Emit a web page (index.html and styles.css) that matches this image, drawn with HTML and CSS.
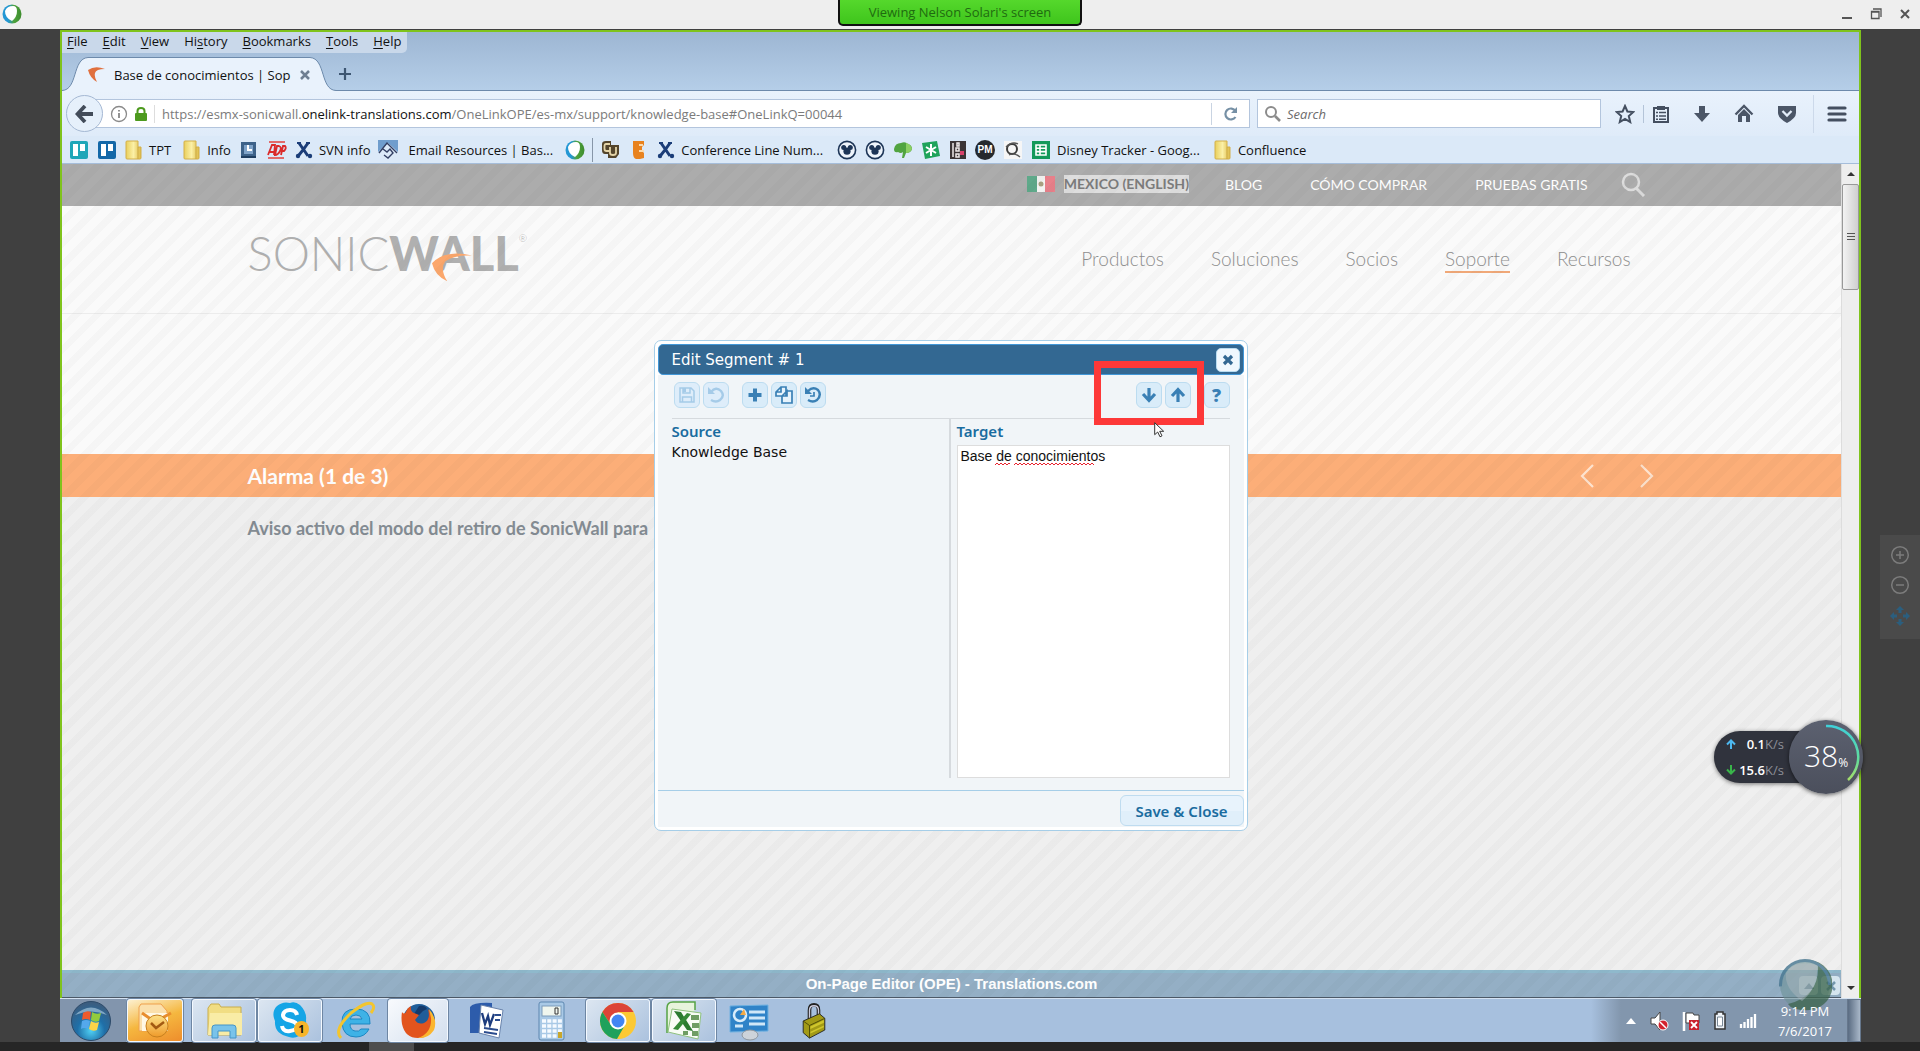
FILE: index.html
```html
<!DOCTYPE html>
<html lang="es">
<head>
<meta charset="utf-8">
<title>Viewing Nelson Solari's screen</title>
<link rel="stylesheet" href="styles.css">
</head>
<body>
<svg width="0" height="0" class="defs" aria-hidden="true">
  <defs>
    <linearGradient id="gFolder" x1="0" x2="1"><stop offset="0" stop-color="#e9cf5c"/><stop offset=".5" stop-color="#fbf0a6"/><stop offset="1" stop-color="#dcb944"/></linearGradient>
    <linearGradient id="gBall" x1="0" x2="1"><stop offset="0.3" stop-color="#2497d4"/><stop offset=".6" stop-color="#4fa33c"/><stop offset="1" stop-color="#3d8c2e"/></linearGradient>
    <radialGradient id="gStart" cx=".5" cy=".75" r=".7"><stop offset="0" stop-color="#4fd0f5"/><stop offset=".5" stop-color="#1f6fa8"/><stop offset="1" stop-color="#3b5d80"/></radialGradient>
    <linearGradient id="gOutlook" x1="0" y1="0" x2="0" y2="1"><stop offset="0" stop-color="#fde28a"/><stop offset="1" stop-color="#ef9a2a"/></linearGradient>
    <linearGradient id="gGauge" x1="0" y1="0" x2="0" y2="1"><stop offset="0" stop-color="#3fd0d8"/><stop offset=".6" stop-color="#5fdc9f"/><stop offset="1" stop-color="#a5dd6a"/></linearGradient>
  </defs>
  <symbol id="folder" viewBox="0 0 18 20"><path d="M2 1h11v6h3v11q0 1-1 1H2q-1 0-1-1V2q0-1 1-1z" fill="url(#gFolder)" stroke="#d3b04a"/><path d="M13 7v12" stroke="#c9a53c"/></symbol>
  <symbol id="ball" viewBox="0 0 20 20"><ellipse cx="10" cy="10" rx="9.5" ry="9.5" fill="url(#gBall)"/><path d="M3 7q2-5 8-5 4 0 4 5 0 6-5 10Q3 14 3 7z" fill="#fff"/></symbol>
  <symbol id="xmark" viewBox="0 0 18 18"><path d="M4 2L13 15M13 2Q9 8 4 14" stroke="#1b3d78" stroke-width="3" fill="none"/><circle cx="3" cy="15" r="2.2" fill="#1b3d78"/><circle cx="15" cy="15" r="2.2" fill="#1b3d78"/><path d="M2 2h4M11 2h4" stroke="#1b3d78" stroke-width="2"/></symbol>
  <symbol id="mickey" viewBox="0 0 20 20"><circle cx="10" cy="10" r="8.6" fill="#eef4fb" stroke="#1d3557" stroke-width="1.6"/><circle cx="6.7" cy="7.6" r="2.5" fill="#1d3557"/><circle cx="13.3" cy="7.6" r="2.5" fill="#1d3557"/><circle cx="10" cy="11.2" r="3.6" fill="#1d3557"/></symbol>
</svg>

<header class="titlebar">
  <svg class="app-icon" viewBox="0 0 20 20"><use href="#ball"/></svg>
  <div class="viewing">Viewing Nelson Solari's screen</div>
  <div class="window-buttons">
    <button type="button" aria-label="Minimize"><svg width="12" height="14" viewBox="0 0 12 14"><path d="M1 11h10" stroke="#555" stroke-width="2"/></svg></button>
    <button type="button" aria-label="Restore"><svg width="12" height="14" viewBox="0 0 12 14"><path d="M1.5 4.500h7.500v7H1.500zM1 5h8M3 2h8v8" stroke="#555" stroke-width="1.300" fill="none"/></svg></button>
    <button type="button" aria-label="Close"><svg width="12" height="14" viewBox="0 0 12 14"><path d="M2 3l8 8M10 3l-8 8" stroke="#555" stroke-width="2"/></svg></button>
  </div>
</header>

<main class="stage">
  <div class="screen">
    <div class="browser">
      <div class="chrome-top">
        <nav class="menubar" aria-label="Browser menu">
          <button type="button"><u>F</u>ile</button><button type="button"><u>E</u>dit</button><button type="button"><u>V</u>iew</button><button type="button">Hi<u>s</u>tory</button><button type="button"><u>B</u>ookmarks</button><button type="button"><u>T</u>ools</button><button type="button"><u>H</u>elp</button>
        </nav>
        <div class="tabs">
          <svg class="tab-edge" viewBox="0 0 26 34"><path d="M0 33.500C16 33 10 1.500 26 .500V34H0z" fill="#e9f2fc"/><path d="M0 33.500C16 33 10 1.500 26 .500" fill="none" stroke="#6d8aab"/></svg>
          <div class="tab">
            <svg width="18" height="18" viewBox="0 0 18 18"><path d="M0 4Q7-1 17 3 8 3 7 7 6 11 9 16 2 12 0 4z" fill="#e0703e"/></svg>
            <span class="tab-title">Base de conocimientos | Sop</span>
            <button type="button" aria-label="Close tab"><svg width="10" height="10" viewBox="0 0 10 10"><path d="M1 1l8 8M9 1L1 9" stroke="#6f7f92" stroke-width="2.500"/></svg></button>
          </div>
          <svg class="tab-edge" viewBox="0 0 26 34"><path d="M26 33.500C10 33 16 1.500 0 .500V34H26z" fill="#e9f2fc"/><path d="M26 33.500C10 33 16 1.500 0 .500" fill="none" stroke="#6d8aab"/></svg>
          <button type="button" class="new-tab" aria-label="New tab"><svg width="12" height="12" viewBox="0 0 12 12"><path d="M6 0v12M0 6h12" stroke="#3d5672" stroke-width="2.200"/></svg></button>
        </div>
      </div>

      <div class="toolbar">
        <button type="button" class="back" aria-label="Back"><svg width="20" height="18" viewBox="0 0 20 18"><path d="M10 1L2.500 9l7.500 8M3 9h15" fill="none" stroke="#434c5a" stroke-width="3.800"/></svg></button>
        <div class="urlbar">
          <svg width="18" height="18" viewBox="0 0 18 18"><circle cx="9" cy="9" r="7.500" fill="none" stroke="#8a8a8a" stroke-width="1.300"/><path d="M9 8v5M9 5v1.600" stroke="#777" stroke-width="1.600"/></svg>
          <svg width="14" height="16" viewBox="0 0 14 16"><rect x="1" y="7" width="12" height="8" rx="1" fill="#4d9a1e"/><path d="M3.500 8V5q0-3 3.500-3t3.500 3v3" fill="none" stroke="#4d9a1e" stroke-width="2"/></svg>
          <span class="url">https://esmx-sonicwall.<b>onelink-translations.com</b>/OneLinkOPE/es-mx/support/knowledge-base#OneLinkQ=00044</span>
          <button type="button" class="reload" aria-label="Reload"><svg width="16" height="16" viewBox="0 0 16 16"><path d="M12.500 5A5.500 5.500 0 1 0 12.500 11" fill="none" stroke="#7690a5" stroke-width="2.200"/><path d="M14 1v6H8z" fill="#7690a5"/></svg></button>
        </div>
        <label class="search"><svg width="18" height="18" viewBox="0 0 18 18"><circle cx="7" cy="7" r="5" fill="none" stroke="#8b8b8b" stroke-width="2"/><path d="M11 11l5 5" stroke="#8b8b8b" stroke-width="2.600"/></svg><input type="text" placeholder="Search" aria-label="Search"></label>
        <div class="tool-icons">
          <button type="button" aria-label="Bookmark"><svg width="20" height="20" viewBox="0 0 20 20"><path d="M10 2l2.400 5.500 5.900.5-4.500 4 1.400 6L10 14.800 4.800 18l1.400-6-4.500-4 5.900-.5z" fill="none" stroke="#444f60" stroke-width="2"/></svg></button>
          <i class="bar"></i>
          <button type="button" aria-label="Bookmarks list"><svg width="18" height="20" viewBox="0 0 18 20"><path d="M2 4h14v14H2z" fill="none" stroke="#444f60" stroke-width="2"/><path d="M5 2h8v4H5z" fill="#444f60"/><path d="M4 8.500h2M7 8.500h7M4 12h2M7 12h7M4 15.200h2M7 15.200h7" stroke="#444f60" stroke-width="1.600"/></svg></button>
          <button type="button" aria-label="Downloads"><svg width="18" height="18" viewBox="0 0 18 18"><path d="M6 1h6v7h5l-8 9-8-9h5z" fill="#4b5667"/></svg></button>
          <button type="button" aria-label="Home"><svg width="20" height="20" viewBox="0 0 20 20"><path d="M1.500 10.500L10 2l8.500 8.500" fill="none" stroke="#4b5667" stroke-width="2.300"/><path d="M4 11l6-6 6 6v7h-4v-6H8v6H4z" fill="#4b5667"/></svg></button>
          <button type="button" aria-label="Pocket"><svg width="20" height="18" viewBox="0 0 20 18"><path d="M1 1h18v7q0 5-9 10-9-5-9-10z" fill="#4b5667"/><path d="M5.500 6l4.500 4.500L14.500 6" fill="none" stroke="#e4eefa" stroke-width="2.300"/></svg></button>
          <button type="button" aria-label="Menu" class="hamburger"><svg width="20" height="18" viewBox="0 0 20 18"><path d="M2 3h16M2 9h16M2 15h16" stroke="#444f60" stroke-width="3.200" stroke-linecap="round"/></svg></button>
        </div>
      </div>

      <nav class="bookmarks" aria-label="Bookmarks">
        <a href="#" aria-label="Trello"><svg width="20" height="20" viewBox="0 0 20 20"><rect x="1" y="1" width="18" height="18" rx="2" fill="#1fa6b8"/><path d="M4 4h5v12H4zM11 4h5v7h-5z" fill="#fff"/></svg></a>
        <a href="#" class="g8" aria-label="Trello boards"><svg width="20" height="20" viewBox="0 0 20 20"><rect x="1" y="1" width="18" height="18" rx="2" fill="#1468a8"/><path d="M4 4h5v12H4zM11 4h5v7h-5z" fill="#fff"/></svg></a>
        <a href="#" class="g8"><svg width="18" height="20"><use href="#folder"/></svg>TPT</a>
        <a href="#" class="g10"><svg width="18" height="20"><use href="#folder"/></svg>Info</a>
        <a href="#" class="g8" aria-label="Journal"><svg width="20" height="18" viewBox="0 0 20 18"><path d="M2 1h15v15H2z" fill="#3d6289"/><path d="M5 4h9v9H5z" fill="#7fa3c9"/><path d="M9 4v5h4" stroke="#fff" stroke-width="2" fill="none"/><path d="M2 16h15" stroke="#1e3d60" stroke-width="2"/></svg></a>
        <a href="#" class="g8" aria-label="ADP"><svg width="20" height="20" viewBox="0 0 20 20"><path d="M2 2h16M1 18h16" stroke="#e26a6a" stroke-width="2"/><path d="M1 15L5 5h3l-1 10M3 12h4M8 15l2-9h2q3 1 1 5-2 4-5 4zM14 15l2-9h2q2 2-1 5h-2" stroke="#da2b2b" stroke-width="1.800" fill="none"/></svg></a>
        <a href="#" class="g8"><svg width="18" height="18"><use href="#xmark"/></svg>SVN info</a>
        <a href="#" class="g8"><svg width="20" height="20" viewBox="0 0 20 20"><path d="M0 0h20v12L10 3 0 12z" fill="#6f9dcd"/><path d="M1 13l8-10 10 10M5 9l4 3 3-3 3 4-5 5-4-3" fill="none" stroke="#333f63" stroke-width="1.400"/></svg><span class="in">Email Resources | Bas...</span></a>
        <a href="#" class="g10" aria-label="WebEx"><svg width="20" height="20"><use href="#ball"/></svg></a>
        <i class="divider"></i>
        <a href="#" class="g8" aria-label="CU"><svg width="20" height="20" viewBox="0 0 20 20"><path d="M1 4q0-3 4-3h5v4h8v9l-3 4H7v-4H4q-3 0-3-4z" fill="#54452c"/><path d="M9 4H5Q3.500 4 3.500 6v3q0 2 2 2h3M9 7v6q0 2 3 2t3-2V7" fill="none" stroke="#e4d4a8" stroke-width="1.800"/></svg></a>
        <a href="#" class="g8" aria-label="Orange"><svg width="20" height="20" viewBox="0 0 20 20"><path d="M4 1h11v4l-2 2v4l2 2v5l-4 1H7q-3-1-3-6z" fill="#e8821e"/><path d="M10 5h4M10 11h5" stroke="#fcd9a9" stroke-width="2"/></svg></a>
        <a href="#" class="g8"><svg width="18" height="18"><use href="#xmark"/></svg><span>Conference Line Num...</span></a>
        <a href="#" class="g14" aria-label="Disney"><svg width="20" height="20"><use href="#mickey"/></svg></a>
        <a href="#" class="g8" aria-label="Disney 2"><svg width="20" height="20"><use href="#mickey"/></svg></a>
        <a href="#" class="g8" aria-label="Leaf"><svg width="20" height="20" viewBox="0 0 20 20"><path d="M1 9q1-6 7-6 4-2 7 1 4 1 4 5-1 4-6 4l-2 5h-2l1-6q-2 2-5 0-4 1-4-3z" fill="#51a440"/><path d="M13 3q5 1 6 6-2 4-6 4z" fill="#8ccf63"/></svg></a>
        <a href="#" class="g8" aria-label="Asterisk"><svg width="20" height="20" viewBox="0 0 20 20"><path d="M1 3l15-2 3 15-15 3z" fill="#1fa35a"/><path d="M10 4v12M5 7l10 6M15 7L5 13" stroke="#fff" stroke-width="2"/></svg></a>
        <a href="#" class="g8" aria-label="Grid"><svg width="18" height="20" viewBox="0 0 18 20"><path d="M1 1h16v18H1z" fill="#3b3436"/><path d="M4 3v14M8 3h2v3H8zM7 8h3v3H7zM7 14h3v3H7z" stroke="#efe9ea" stroke-width="1.500" fill="none"/><path d="M11 11h4v4h-4z" fill="#d8416b"/></svg></a>
        <a href="#" class="g8" aria-label="PM"><span class="pm">PM</span></a>
        <a href="#" class="g8" aria-label="Q"><svg width="20" height="20" viewBox="0 0 20 20"><path d="M1 1h18v18H1z" fill="#f6f6f6"/><circle cx="9" cy="9" r="5" fill="none" stroke="#3b3b3b" stroke-width="2"/><path d="M3 7Q9 1 15 4M6 15q5-3 11 2" stroke="#555" stroke-width="1.300" fill="none"/></svg></a>
        <a href="#" class="g8"><svg width="20" height="20" viewBox="0 0 20 20"><path d="M1 1h18v18H1z" fill="#12995a"/><path d="M5 5h10v10H5zM5 8.300h10M5 11.600h10M9 5v10" fill="none" stroke="#fff" stroke-width="1.600"/></svg>Disney Tracker - Goog...</a>
        <a href="#" class="g14"><svg width="18" height="20"><use href="#folder"/></svg>Confluence</a>
      </nav>

      <div class="viewport">
        <div class="site">
          <div class="site-top">
            <div class="wrap">
              <svg class="flag" width="28" height="16" viewBox="0 0 28 16"><path d="M0 0h10v16H0z" fill="#5fa98a"/><path d="M10 0h8v16h-8z" fill="#f3f3f1"/><path d="M18 0h10v16H18z" fill="#e8808a"/><circle cx="14" cy="8" r="2.500" fill="#a8a080"/></svg>
              <a href="#" class="country">MEXICO (ENGLISH)</a>
              <a href="#" class="blog">BLOG</a>
              <a href="#" class="buy">CÓMO COMPRAR</a>
              <a href="#" class="trial">PRUEBAS GRATIS</a>
              <button type="button" class="site-search" aria-label="Buscar"><svg width="26" height="26" viewBox="0 0 26 26"><circle cx="11" cy="11" r="8" fill="none" stroke="#dcdcdc" stroke-width="2.500"/><path d="M16 17l8 8" stroke="#dcdcdc" stroke-width="3"/></svg></button>
            </div>
          </div>
          <header class="site-head">
            <div class="wrap">
              <a href="#" class="logo" aria-label="SonicWall">SONIC<b>WALL</b><sup>®</sup><svg width="40" height="30" viewBox="0 0 42 30"><path d="M0 11Q14-4 42 3 24 2 14 9 8 17 16 30 3 24 0 11z" fill="#fba76c"/></svg></a>
              <nav class="site-nav" aria-label="Principal">
                <a href="#">Productos</a><a href="#">Soluciones</a><a href="#">Socios</a><a href="#" class="current">Soporte</a><a href="#">Recursos</a>
              </nav>
            </div>
          </header>
          <div class="hero"></div>
          <section class="alarm">
            <div class="wrap">
              <h2>Alarma (1 de 3)</h2>
              <div class="arrows">
                <button type="button" aria-label="Anterior"><svg width="14" height="24" viewBox="0 0 14 24"><path d="M13 1L2 12l11 11" fill="none" stroke="#fde3cf" stroke-width="2.200"/></svg></button>
                <button type="button" aria-label="Siguiente"><svg width="14" height="24" viewBox="0 0 14 24"><path d="M1 1l11 11L1 23" fill="none" stroke="#fde3cf" stroke-width="2.200"/></svg></button>
              </div>
            </div>
          </section>
          <section class="notice"><div class="wrap"><p>Aviso activo del modo del retiro de SonicWall para</p></div></section>
          <footer class="ope">On-Page Editor (OPE) - Translations.com</footer>
          <div class="stripes"></div>
          <div class="ope-buttons">
            <button type="button" aria-label="Expand"><svg width="10" height="8" viewBox="0 0 10 8"><path d="M5 1l5 6H0z" fill="#5c7f92"/></svg></button>
            <button type="button" aria-label="Close editor"><svg width="10" height="10" viewBox="0 0 10 10"><path d="M1 1l8 8M9 1L1 9" stroke="#7397ac" stroke-width="2.500"/></svg></button>
          </div>

          <section class="dialog" role="dialog" aria-labelledby="dlg-title">
            <header class="dlg-head">
              <h1 id="dlg-title">Edit Segment # 1</h1>
              <button type="button" aria-label="Close"><svg width="12" height="12" viewBox="0 0 12 12"><path d="M2 2l8 8M10 2l-8 8" stroke="#336892" stroke-width="3.200"/></svg></button>
            </header>
            <div class="dlg-body">
              <div class="dlg-tools">
                <button type="button" class="ib" disabled aria-label="Save"><svg viewBox="0 0 20 20"><path d="M3 3h11l3 3v11H3zM6 3v5h7V3M5.500 17v-5h9v5" fill="none" stroke="#a5cbe8" stroke-width="1.500"/><path d="M6 3h3v4H6z" fill="#a5cbe8"/></svg></button>
                <button type="button" class="ib" disabled aria-label="Undo"><svg viewBox="0 0 20 20"><path d="M5 7q5-6 10-1 4 5-1 9-4 3-9 0" fill="none" stroke="#a5cbe8" stroke-width="2.400"/><path d="M2 2v7h7z" fill="#a5cbe8"/></svg></button>
                <button type="button" class="ib gap-l" aria-label="Add"><svg viewBox="0 0 20 20"><path d="M10 3.500v13M3.500 10h13" stroke="#3a80b5" stroke-width="4"/></svg></button>
                <button type="button" class="ib" aria-label="Copy"><svg viewBox="0 0 20 20"><path d="M7 2h5v9H2V7zM7 2v5H2M12 6h6v12H8v-7l5-5v5H8" fill="#e6f3fc" stroke="#3a80b5" stroke-width="1.700"/></svg></button>
                <button type="button" class="ib" aria-label="History"><svg viewBox="0 0 20 20"><path d="M5 6q5-5 10-1 4 5-1 10-4 3-9 0" fill="none" stroke="#3a80b5" stroke-width="2.400"/><path d="M2 2v7h7z" fill="#3a80b5"/><path d="M11 7v4H7" fill="none" stroke="#3a80b5" stroke-width="1.700"/></svg></button>
                <button type="button" class="ib push" aria-label="Next segment"><svg viewBox="0 0 20 20"><path d="M10 3v12M4 9l6 6.500L16 9" fill="none" stroke="#3a80b5" stroke-width="3.200"/></svg></button>
                <button type="button" class="ib" aria-label="Previous segment"><svg viewBox="0 0 20 20"><path d="M10 17V5M4 11l6-6.500 6 6.500" fill="none" stroke="#3a80b5" stroke-width="3.200"/></svg></button>
                <button type="button" class="ib gap-s" aria-label="Help">?</button>
                <span class="marker"></span>
              </div>
              <div class="cols">
                <div class="source"><h3>Source</h3><p>Knowledge Base</p></div>
                <div class="target"><label for="target">Target</label>
                  <div class="field"><textarea id="target" spellcheck="false">Base de conocimientos</textarea>
                  <svg class="squiggle" width="110" height="4" viewBox="0 0 110 4"><path d="M0 3l2-2 2 2 2-2 2 2 2-2 2 2 2-2 1 1M19 3l2-2 2 2 2-2 2 2 2-2 2 2 2-2 2 2 2-2 2 2 2-2 2 2 2-2 2 2 2-2 2 2 2-2 2 2 2-2 2 2 2-2 2 2 2-2 2 2 2-2 2 2 2-2 2 2 2-2 2 2 2-2 2 2 2-2 2 2 2-2 2 2 2-2 2 2 2-2 2 2" fill="none" stroke="#e8222e"/></svg></div>
                </div>
              </div>
              <svg class="cursor" width="11" height="16" viewBox="0 0 11 16"><path d="M.700.700v12l3-2.700 2.300 4.800 2-1-2.300-4.500h4z" fill="#fff" stroke="#333"/></svg>
            </div>
            <footer class="dlg-foot"><button type="button">Save &amp; Close</button></footer>
          </section>
        </div>
        <div class="scroll" aria-hidden="true">
          <svg width="18" height="20" viewBox="0 0 18 20"><path d="M9 8l4 4H5z" fill="#333"/></svg>
          <div class="thumb"><i></i></div>
          <svg class="down" width="18" height="20" viewBox="0 0 18 20"><path d="M9 12l4-4H5z" fill="#333"/></svg>
        </div>
      </div>
    </div>

    <footer class="taskbar">
      <button type="button" class="task start" aria-label="Start"><svg width="42" height="42" viewBox="0 0 42 42"><circle cx="21" cy="21" r="19.500" fill="url(#gStart)" stroke="#2d4a69"/><path d="M5 15Q21 0 37 15 21 8 5 15z" fill="#b8d4e6" opacity=".6"/><path d="M13 13q4-3 8-1l-1 8q-4-2-8 0z" fill="#ee5a2c"/><path d="M22 12q4 3 9 1l-2 8q-4 2-8-1z" fill="#93cc3d"/><path d="M12 21q4-2 8 0l-2 8q-4-2-7 0z" fill="#54a8ec"/><path d="M21 21q4 3 8 1l-2 8q-4 2-8-1z" fill="#fdd447"/></svg></button>
      <button type="button" class="task open hot" aria-label="Outlook"><svg width="40" height="40" viewBox="0 0 40 40"><path d="M6 3h20l6 7v20H4V6z" fill="#fbe0ac" stroke="#efa04c"/><path d="M7 12h26v18H7z" fill="#fff8e4"/><path d="M7 12l13 9 16-9" fill="none" stroke="#e88d2e" stroke-width="3"/><circle cx="22" cy="25" r="11" fill="url(#gOutlook)" stroke="#c7801f"/><path d="M16 22l5 5 8-6" fill="none" stroke="#a35a12" stroke-width="2.500"/></svg></button>
      <button type="button" class="task open s9" aria-label="Explorer"><svg width="42" height="40" viewBox="0 0 42 40"><path d="M5 7l3-4h8l2 3h20v28H5z" fill="#f1dd83" stroke="#c9ad4a"/><path d="M7 12h32v22H5z" fill="#f9eca6"/><path d="M9 37V27q0-3 3-3h18q3 0 3 3v10h-6v-7H15v7z" fill="#79c3ea" stroke="#4595c8"/></svg></button>
      <button type="button" class="task open s2" aria-label="Skype"><svg width="42" height="42" viewBox="0 0 42 42"><path d="M21 3q5-2 10 2 7 7 6 15 1 12-7 16-5 3-10 1Q5 34 6 21 2 12 8 6 14 1 21 3z" fill="#15a5e6"/><path d="M28 15q-1-5-7-5t-7 5q0 4 7 5.500t7 5.500-7 5-8-5" fill="none" stroke="#fff" stroke-width="4"/></svg><span class="count">1</span></button>
      <button type="button" class="task s2" aria-label="Internet Explorer"><svg width="42" height="42" viewBox="0 0 42 42"><path d="M35 24q1-15-14-15T7 23t14 14q9 0 13-8h-8q-2 3-6 2-5-1-5-7zM15 19q1-4 6-4t6 4z" fill="#3eb2e6" stroke="#1d87c2"/><path d="M6 38Q-2 30 16 13 34-1 38 5q2 3-2 8" fill="none" stroke="#f3c52f" stroke-width="3"/></svg></button>
      <button type="button" class="task open hot2" aria-label="Firefox"><svg width="42" height="42" viewBox="0 0 42 42"><circle cx="22" cy="20" r="16" fill="#1f5d99"/><path d="M22 6q6-1 8 3l-4 2-5 5-4-2z" fill="#153a6b"/><path d="M5 12q2 3 4 0 1-4 5-6-1 5 3 7l5 2-4 5q3 5 9 3 7-3 4-14 7 8 6 15-3 14-16 14T5 24q-1-6 0-12z" fill="#e2541d"/><path d="M32 9q9 10 5 21-6 9-16 8 14-5 13-20z" fill="#fbb62f"/></svg></button>
      <button type="button" class="task s4" aria-label="Word"><svg width="42" height="42" viewBox="0 0 42 42"><path d="M3 7q4-5 22-4v30H3z" fill="#2d5cab"/><path d="M14 5l22 5-4 28-20-5z" fill="#fff" stroke="#6983ac"/><path d="M15 13l3 11 3-8 2 9 4-11" fill="none" stroke="#1d3c7e" stroke-width="2.300"/><path d="M28 15h6M28 20h5M17 28l14 2M17 32l13 2" stroke="#2a4b8d" stroke-width="2"/></svg></button>
      <button type="button" class="task" aria-label="Calculator"><svg width="28" height="40" viewBox="0 0 28 40"><rect x="1" y="1" width="25" height="38" rx="2" fill="#a9c9e6" stroke="#5d87b0"/><rect x="4" y="5" width="19" height="10" fill="#f0f6ee" stroke="#7c9cba"/><path d="M17 7h3v6h-3z" fill="none" stroke="#333"/><path d="M4 20h20M4 25h20M4 30h20M4 35h20" stroke="#f5faff" stroke-width="3.500" stroke-dasharray="4 1.300"/><path d="M20 31h4v6h-4z" fill="#c9a72c"/></svg></button>
      <button type="button" class="task open s2" aria-label="Chrome"><svg width="38" height="38" viewBox="0 0 38 38"><circle cx="19" cy="19" r="18" fill="#fcc934"/><path d="M3.400 10A18 18 0 0 1 34.600 10H19L12 23z" fill="#dc4437"/><path d="M3.400 10A18 18 0 0 0 18 37l8-14H12z" fill="#1ea15c"/><circle cx="19" cy="19" r="8.500" fill="#fff"/><circle cx="19" cy="19" r="6.500" fill="#4285f4"/></svg></button>
      <button type="button" class="task open s2" aria-label="Excel"><svg width="42" height="42" viewBox="0 0 42 42"><path d="M4 33V8q0-6 6-6h22v8" fill="#e7f4dc" stroke="#56a344" stroke-width="1.500"/><path d="M9 9l29 4-3 26-30-7z" fill="#f8fcf5" stroke="#8fc27e"/><path d="M11 11l7 1 12 19-6-1z" fill="#2b7b2f"/><path d="M24 13l-14 16 5 1 13-16z" fill="#358a37"/><path d="M28 15h8v5h-8zM29 23h7v5h-7zM29 31h6v5h-6zM20 31h5v4h-5z" fill="#6f9d63"/></svg></button>
      <button type="button" class="task s2" aria-label="Control panel"><svg width="42" height="40" viewBox="0 0 42 40"><path d="M1 5l38-1v26L1 31z" fill="#2f83c8" stroke="#6eb0e0"/><circle cx="11" cy="14" r="6" fill="none" stroke="#d8ecfa" stroke-width="2.500"/><path d="M15 8l-4 6h6z" fill="#f4aa47"/><path d="M20 11h16M20 17h16M20 23h16M6 25h8" stroke="#cfe7f8" stroke-width="3"/><ellipse cx="21" cy="34" rx="8" ry="5" fill="#cdd3da" stroke="#8e979f"/></svg></button>
      <button type="button" class="task" aria-label="Lock"><svg width="26" height="36" viewBox="0 0 28 40"><path d="M9 19V8q0-6 5-6t5 6v6" fill="none" stroke="#222" stroke-width="4"/><path d="M9 17V8q0-5 5-5t5 5v6" fill="none" stroke="#ccd" stroke-width="1.500"/><path d="M2 20l18-8 6 5v13L9 39l-7-6z" fill="#a29a16" stroke="#222"/><path d="M2 20l7 5 17-8M9 25v14" stroke="#4a4705" fill="none"/><path d="M10 26l15-7v3l-15 7zM10 32l15-7v2l-15 7z" fill="#d0c62c"/></svg></button>
      <div class="tray">
        <div class="tray-icons">
          <svg width="12" height="8" viewBox="0 0 12 8"><path d="M6 1l5 6H1z" fill="#fff"/></svg>
          <svg width="20" height="22" viewBox="0 0 20 22"><path d="M2 8h4l5-6v18l-5-6H2z" fill="#fff" stroke="#444"/><circle cx="14" cy="15" r="5" fill="#d3222d" stroke="#fff"/><path d="M11 12l6 6" stroke="#fff" stroke-width="1.500"/></svg>
          <svg width="20" height="22" viewBox="0 0 20 22"><path d="M3 2v19" stroke="#fff" stroke-width="2.500"/><path d="M5 3h7l1 2h5v8H5z" fill="#fff" stroke="#444"/><path d="M8 10h10v10H8z" fill="#c9222d"/><path d="M10 12l6 6M16 12l-6 6" stroke="#fff" stroke-width="1.800"/></svg>
          <svg width="14" height="22" viewBox="0 0 14 22"><path d="M2 4h2V2h6v2h2v15H2z" fill="#eef3f8" stroke="#333" stroke-width="1.500"/><path d="M4.500 7h5v9h-5z" fill="#fff" stroke="#7a8896"/></svg>
          <svg width="18" height="16" viewBox="0 0 18 16"><path d="M2 15v-4M5.500 15V9M9 15V6M12.500 15V4M16 15V1" stroke="#fff" stroke-width="2.300"/></svg>
        </div>
        <div class="clock">9:14 PM<br>7/6/2017</div>
        <i class="show-desktop"></i>
      </div>
    </footer>
  </div>
  <svg class="session-ball" width="54" height="54" viewBox="0 0 54 54"><circle cx="27" cy="27" r="25" fill="#6e9195" opacity=".75"/><path d="M27 2a25 25 0 0 1 5 50Q14 53 10 46 42 38 40 6z" fill="#355f43" opacity=".85"/><path d="M10 12Q20 2 39 7q2 22-15 36Q6 30 8 15z" fill="#a7b2b7" opacity=".6"/><circle cx="27" cy="27" r="24.500" fill="none" stroke="#45758f" stroke-width="3" stroke-dasharray="80 200" stroke-dashoffset="-75"/></svg>
  <div class="zoom-panel">
    <button type="button" aria-label="Zoom in"><svg width="20" height="20" viewBox="0 0 20 20"><circle cx="10" cy="10" r="8.300" fill="none" stroke="#7c7c7c" stroke-width="1.500"/><path d="M10 6v8M6 10h8" stroke="#7c7c7c" stroke-width="1.500"/></svg></button>
    <button type="button" aria-label="Zoom out"><svg width="20" height="20" viewBox="0 0 20 20"><circle cx="10" cy="10" r="8.300" fill="none" stroke="#7c7c7c" stroke-width="1.500"/><path d="M6 10h8" stroke="#7c7c7c" stroke-width="1.500"/></svg></button>
    <button type="button" aria-label="Fit"><svg width="22" height="22" viewBox="0 0 22 22"><path d="M11 1l4 4h-2.500v3h-3V5H7zM11 21l4-4h-2.500v-3h-3v3H7zM1 11l4-4v2.500h3v3H5V15zM21 11l-4-4v2.500h-3v3h3V15z" fill="#2b5e7e"/></svg></button>
  </div>
  <div class="meter">
    <div class="rates">
      <div><svg width="10" height="10" viewBox="0 0 10 10"><path d="M5 10V2M1 5.500l4-4 4 4" stroke="#4db8f0" stroke-width="2" fill="none"/></svg><b>0.1</b>K/s</div>
      <div><svg width="10" height="10" viewBox="0 0 10 10"><path d="M5 0v8M1 4.500l4 4 4-4" stroke="#39b54a" stroke-width="2" fill="none"/></svg><b>15.6</b>K/s</div>
    </div>
    <div class="gauge"><svg width="74" height="74" viewBox="0 0 74 74"><path d="M37 6A31 31 0 0 1 59 60" fill="none" stroke="url(#gGauge)" stroke-width="2.500"/></svg><span>38</span><small>%</small></div>
  </div>
</main>
<div class="strip"><i></i></div>
</body>
</html>
```
FILE: styles.css
```css
* { box-sizing: border-box; }
body {
  margin: 0;
  min-height: 100vh;
  display: flex;
  flex-direction: column;
  background: #404040;
  font-family: "Open Sans", "Noto Sans", sans-serif;
  font-size: 13px;
  color: #111;
}
button { font: inherit; color: inherit; background: none; border: 0; padding: 0; margin: 0; display: inline-flex; align-items: center; justify-content: center; }
a { color: inherit; text-decoration: none; }
svg { display: block; flex: none; }
.defs { position: absolute; }
h1, h2, h3, p { margin: 0; font-weight: 400; }

/* conferencing window */
.titlebar { height: 29px; background: #eee; display: grid; grid-template-columns: 1fr auto 1fr; }
.app-icon { width: 22px; height: 20px; margin: 4px 0 0 1px; }
.viewing {
  width: 244px; height: 26px; line-height: 24px; text-align: center; color: #1f6a10;
  background: linear-gradient(#55d82c, #3fc51c);
  border: 2px solid #111; border-top: 0; border-radius: 0 0 5px 5px;
}
.window-buttons { display: flex; justify-content: flex-end; gap: 17px; padding-right: 9px; height: 28px; }
.stage { flex: 1; display: flex; padding: 0 59px 0 60px; position: relative; }
.screen { flex: 1; min-width: 0; display: flex; flex-direction: column; }
.browser { flex: 1; display: flex; flex-direction: column; border: 2px solid #7fc31c; border-bottom: 0; margin-top: 1px; }
.strip { height: 9px; background: #262626; display: flex; }
.strip i { width: 45px; margin-left: 369px; background: #4d4d4d; }

/* browser chrome */
.chrome-top { background: linear-gradient(#9db6d3, #b5cee8); border-bottom: 1px solid #6d8aab; height: 59px; display: flex; flex-direction: column; justify-content: space-between; align-items: flex-start; }
.menubar { display: flex; gap: 15px; padding: 0 6px 3px 5px; height: 21px; background: #c9d8ea; border-radius: 0 0 5px 0; }
.menubar u { text-underline-offset: 2px; }
.tabs { display: flex; align-items: flex-end; margin-bottom: -1px; }
.tab-edge { width: 26px; height: 34px; }
.tab { height: 34px; width: 222px; background: #e9f2fc; border-top: 1px solid #6d8aab; display: flex; align-items: center; gap: 8px; }
.tab-title { flex: 1; white-space: nowrap; }
.new-tab { height: 34px; margin-left: 3px; }
.toolbar { display: flex; align-items: center; height: 45px; background: linear-gradient(#e9f2fc, #dfebf9); padding: 0 12px 0 4px; }
.back { width: 37px; height: 37px; border-radius: 50%; background: #e6f0fb; border: 1px solid #a5b8d3; flex: none; position: relative; z-index: 1; }
.urlbar { flex: 1; height: 29px; background: #fff; border: 1px solid #b3c5dd; display: flex; align-items: center; margin-left: -16px; padding-left: 22px; gap: 6px; }
.url { color: #7b7b7b; flex: 1; border-left: 1px solid #ddd; padding-left: 7px; white-space: nowrap; overflow: hidden; }
.url b { color: #111; font-weight: 400; }
.reload { width: 38px; height: 22px; border-left: 1px solid #c9d4e2; }
.search { width: 344px; height: 29px; background: #fff; border: 1px solid #b3c5dd; margin-left: 7px; display: flex; align-items: center; padding-left: 6px; gap: 5px; }
.search input { border: 0; outline: 0; flex: 1; min-width: 0; font: inherit; padding: 0; background: none; }
.search input::placeholder { color: #6c6c6c; font-style: italic; opacity: 1; }
.tool-icons { display: flex; align-items: center; gap: 23px; margin-left: 14px; }
.bar { width: 1px; height: 18px; background: #b4c4d8; margin: 0 -15px; }
.hamburger { height: 38px; border-left: 1px solid #ccd9ea; padding-left: 13px; margin-left: -7px; }
.bookmarks { display: flex; align-items: center; height: 28px; background: #dbe9f8; border-bottom: 1px solid #a5bdda; padding-left: 7px; white-space: nowrap; }
.bookmarks a { display: flex; align-items: center; gap: 6px; }
.bookmarks .g8 { margin-left: 8px; }
.bookmarks .g10 { margin-left: 12px; }
.bookmarks .g14 { margin-left: 14px; }
.in { padding-left: 4px; }
.divider { width: 1px; height: 24px; background: #8796a8; margin-left: 7px; }
.pm { width: 20px; height: 20px; border-radius: 50%; background: #26292d; color: #fff; font: bold 10px/20px "Liberation Sans", sans-serif; text-align: center; }

/* page */
.viewport { flex: 1; display: flex; }
.site { flex: 1; min-width: 0; position: relative; background: #efefef; font-family: Lato, sans-serif; display: flex; flex-direction: column; }
.wrap { width: 100%; max-width: 1408px; margin: 0 auto; display: flex; align-items: center; }
.site-top { background: #acacac; height: 42px; display: flex; color: #fff; font-size: 14px; }
.site-top .wrap { justify-content: flex-end; padding: 0 10px 2px 0; }
.country { background: #dedede; color: #7c7c7c; font-weight: 700; line-height: 18px; margin: 0 36px 0 9px; }
.blog { margin-right: 48px; }
.buy { margin-right: 48px; }
.trial { margin-right: 32px; }
.site-head { height: 108px; background: #fafafa; border-bottom: 1px solid #ececec; display: flex; }
.logo { position: relative; font-size: 47px; font-weight: 300; line-height: 54px; color: #b0b0b0; display: flex; margin-top: -14px; }
.logo b { font-weight: 900; }
.logo sup { font-size: 10px; line-height: 24px; }
.logo svg { position: absolute; left: 184px; top: 26px; }
.site-nav { margin-left: auto; display: flex; gap: 47px; padding-right: 25px; font-size: 19px; font-weight: 300; color: #8f8f8f; line-height: 24px; }
.site-nav a { border-bottom: 2px solid transparent; }
.site-nav .current { border-color: #f0a878; }
.hero { height: 140px; background: #fafafa; }
.alarm { height: 43px; background: #fcae78; display: flex; }
.alarm h2 { font-size: 21px; font-weight: 700; color: #fff; flex: 1; }
.arrows { display: flex; gap: 46px; padding-right: 2px; }
.notice { flex: 1; padding-top: 19px; font-size: 18px; line-height: 24px; color: #848c93; }
.notice p { font-weight: 700; }
.ope { height: 28px; background: #94afc5; border-top: 3px solid #8fb9cc; border-bottom: 1px solid #4d5a68; color: #fff; font: bold 15px/22px "Liberation Sans", sans-serif; text-align: center; }
.stripes { position: absolute; inset: 0; background: repeating-linear-gradient(135deg, transparent 0 8px, rgba(0, 0, 0, .018) 8px 15px); pointer-events: none; }
.ope-buttons { position: absolute; right: 1px; bottom: 3px; display: flex; gap: 3px; }
.ope-buttons button { width: 19px; height: 19px; border-radius: 4px; background: #d5e5ee; }
.scroll { width: 18px; background: #eee; border-left: 1px solid #ddd; display: flex; flex-direction: column; }
.thumb { height: 106px; border: 1px solid #999; border-radius: 2px; background: linear-gradient(90deg, #f3f3f3, #cfcfcf); display: flex; align-items: center; justify-content: center; }
.thumb i { width: 8px; height: 9px; background: repeating-linear-gradient(#555 0 1px, transparent 1px 3px); }
.down { margin-top: auto; }

/* segment editor */
.dialog { position: absolute; top: 176px; left: calc(50% - 298px); width: 594px; border: 1px solid #a6cee8; border-radius: 7px; background: #fff; padding: 3px; font-family: "Open Sans", "DejaVu Sans", sans-serif; }
.dlg-head { height: 31px; background: #336892; border: 1px solid #4297d7; border-radius: 5px; display: flex; align-items: center; padding: 0 3px 0 13px; }
.dlg-head h1 { font: 15px "DejaVu Sans", sans-serif; color: #fff; flex: 1; }
.dlg-head button { width: 24px; height: 24px; border-radius: 5px; background: #f0f8fe; border: 1px solid #b9dcf0; }
.dlg-body { background: #f1f5f8; padding: 7px 14px 12px; position: relative; }
.dlg-tools { display: flex; gap: 3px; height: 37px; padding: 0 0 0 2px; border-bottom: 1px solid #d6dade; position: relative; }
.ib { width: 26px; height: 26px; border-radius: 6px; background: #d9ecf9; border: 1px solid #bcdcf0; color: #3a80b5; font-size: 18px; font-weight: 800; line-height: 20px; }
.ib svg { width: 20px; height: 20px; }
.ib:disabled { background: #deedfa; }
.gap-l { margin-left: 10px; }
.gap-s { margin-left: 10px; }
.push { margin-left: auto; }
.marker { position: absolute; right: 26px; top: -21px; width: 110px; height: 64px; border: 7px solid #fd3838; }
.cols { display: grid; grid-template-columns: 1fr 279px; }
.cols h3, .cols label { display: block; font: 600 15px/24px "Noto Sans", sans-serif; color: #1a6c9f; }
.cols p { font-family: "DejaVu Sans", sans-serif; font-size: 14px; line-height: 18px; }
.source { border-right: 2px solid #d6dade; }
.target { padding-left: 6px; }
.field { position: relative; margin-top: 2px; }
.field textarea { display: block; width: 100%; height: 333px; border: 1px solid #ddd; resize: none; padding: 1px 3px; font: 14px/18px "Liberation Sans", sans-serif; color: #111; background: #fff; outline: 0; }
.squiggle { position: absolute; left: 38px; top: 17px; }
.cursor { position: absolute; left: 496px; top: 47px; }
.dlg-foot { background: #f1f5f8; border-top: 1px solid #a6cee8; height: 37px; display: flex; align-items: flex-start; justify-content: flex-end; padding-top: 4px; }
.dlg-foot button { width: 124px; height: 31px; border: 1px solid #bfdcf0; border-radius: 6px; background: linear-gradient(#e8f3fc 50%, #e0effa 50%); color: #1a6c9f; font: 600 15px "Noto Sans", sans-serif; }

/* taskbar */
.taskbar { height: 44px; background: linear-gradient(90deg, #8295ad 66px, #a7c0de 66px calc(100% - 270px), #8296ad calc(100% - 240px)); border-top: 1px solid #d4e2f2; display: flex; align-items: center; }
.task { width: 64px; height: 43px; position: relative; flex: none; }
.start { width: 62px; margin-right: 5px; }
.open { border: 1px solid #f4f9ff; border-radius: 3px; background: linear-gradient(135deg, #dce6f1, #abc2de); box-shadow: 0 0 0 1px #6e86a3; }
.hot { width: 56px; background: linear-gradient(160deg, #fdf0cf, #f5b73f 50%, #ee8d2c); }
.hot2 { width: 60px; background: linear-gradient(135deg, #f8fafd, #d3dfee); }
.s2 { margin-left: 2px; }
.s4 { margin-left: 8px; }
.s9 { margin-left: 9px; }
.count { position: absolute; right: 12px; bottom: 4px; width: 15px; height: 16px; border-radius: 50%; background: #f7b52a; font-size: 11px; line-height: 16px; font-weight: 700; }
.tray { margin-left: auto; display: flex; align-items: center; color: #fff; height: 43px; }
.tray-icons { display: flex; align-items: center; gap: 12px; padding-right: 6px; }
.clock { width: 84px; text-align: center; line-height: 20px; font-size: 13px; position: relative; z-index: 2; }
.show-desktop { width: 14px; height: 43px; background: linear-gradient(90deg, #5a6c82, #a8b7c8); border: 1px solid #66778c; }

/* floating overlays */
.session-ball { position: absolute; right: 88px; bottom: 30px; opacity: .8; }
.zoom-panel { position: absolute; right: 0; top: 506px; width: 40px; height: 104px; background: #4a4a4a; display: flex; flex-direction: column; align-items: center; gap: 10px; padding-top: 10px; }
.meter { position: absolute; right: 57px; top: 691px; display: flex; align-items: center; }
.rates { width: 112px; height: 52px; border-radius: 26px 0 0 26px; background: #30333d; color: #8c8f98; padding-left: 12px; margin-right: -37px; box-shadow: 0 1px 4px rgba(0, 0, 0, .5); }
.rates div { height: 26px; width: 58px; display: flex; align-items: center; justify-content: flex-end; font-size: 13px; }
.rates svg { margin-right: auto; }
.rates b { color: #fff; font-weight: 600; }
.gauge { width: 74px; height: 74px; border-radius: 50%; background: linear-gradient(#5c6170, #4b4f5c); color: #fff; position: relative; display: flex; align-items: baseline; justify-content: center; line-height: 72px; font-size: 30px; font-weight: 300; box-shadow: 0 1px 4px rgba(0, 0, 0, .6); }
.gauge svg { position: absolute; left: 0; top: 0; }
.gauge small { font-size: 12px; font-weight: 400; }
```
